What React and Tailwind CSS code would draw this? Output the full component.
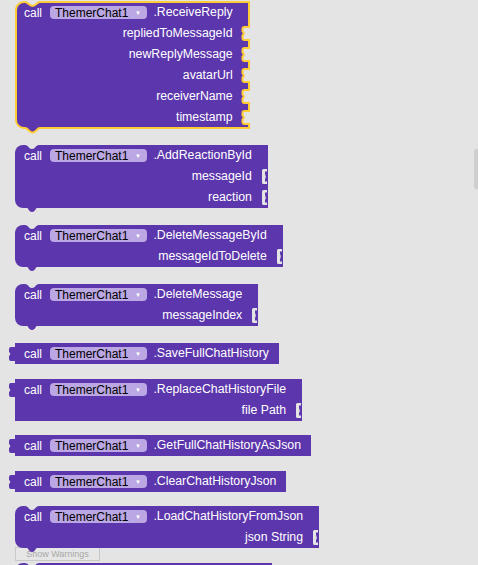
import React from "react";

const BG = "#e4e4e4";
const PURPLE = "#5c36ac";
const YELLOW = "#ffcc33";

function Pill() {
  return (
    <span className="flex items-center h-[13px] rounded-[4px] bg-[#bba7e4] pl-[5px] pr-[5px] text-black text-[12px]">
      <span>ThemerChat1</span>
      <span className="ml-[5px] w-[9px] text-center text-[6px] text-white leading-none">▼</span>
    </span>
  );
}

function Socket({ selected }) {
  if (selected) {
    return (
      <svg className="absolute right-[-1px] top-[3px]" width="10" height="15" viewBox="0 0 10 15">
        <path d="M10,1 H4.5 Q2.5,1 2.5,3 V5.5 Q5,7.5 2.5,9.5 V12 Q2.5,14 4.5,14 H10 Z" fill={BG} />
        <path d="M10,1 H4.5 Q2.5,1 2.5,3 V5.5 Q5,7.5 2.5,9.5 V12 Q2.5,14 4.5,14 H10" fill="none" stroke={YELLOW} strokeWidth="2" />
      </svg>
    );
  }
  return (
    <svg className="absolute right-0 top-[3px]" width="7" height="15" viewBox="0 0 7 15">
      <path d="M6,0 H2.5 Q1,0 1,1.5 V13.5 Q1,15 2.5,15 H6 V12.5 H4 V10 Q5.5,7.5 4,5 V2.5 H6 Z" fill={BG} />
    </svg>
  );
}

function TopNotch({ selected }) {
  if (selected) {
    return (
      <svg className="absolute top-[-1px] left-[9px]" width="15" height="7" viewBox="0 0 15 7">
        <path d="M0,0 H15 V1 C11.5,1 11.5,5 7.5,5 C3.5,5 3.5,1 0,1 Z" fill={BG} />
        <path d="M0,1 C3.5,1 3.5,5 7.5,5 C11.5,5 11.5,1 15,1" fill="none" stroke={YELLOW} strokeWidth="2" />
      </svg>
    );
  }
  return (
    <svg className="absolute top-0 left-[10px]" width="14" height="5" viewBox="0 0 14 5">
      <path d="M0,0 C3.5,0 3.5,4 7,4 C10.5,4 10.5,0 14,0 Z" fill={BG} />
    </svg>
  );
}

function BottomTab({ selected }) {
  if (selected) {
    return (
      <svg className="absolute top-full left-[9px] -mt-[2px]" width="15" height="9" viewBox="0 0 15 9">
        <path d="M0,0 H15 V2 C11.5,2 11.5,6.5 7.5,6.5 C3.5,6.5 3.5,2 0,2 Z" fill={PURPLE} />
        <path d="M0,2 C3.5,2 3.5,6.5 7.5,6.5 C11.5,6.5 11.5,2 15,2" fill="none" stroke={YELLOW} strokeWidth="2" />
      </svg>
    );
  }
  return (
    <svg className="absolute top-full left-[10px] -mt-[1px]" width="14" height="6" viewBox="0 0 14 6">
      <path d="M0,0 C3.5,0 3.5,5 7,5 C10.5,5 10.5,0 14,0 Z" fill={PURPLE} />
    </svg>
  );
}

function OutputTab() {
  return (
    <svg className="absolute right-full top-[4px] -mr-[1px]" width="8" height="14" viewBox="0 0 8 14">
      <path d="M8,0 H3 Q1,0 1,2 V5 Q3.5,7 1,9 V12 Q1,14 3,14 H8 Z" fill={PURPLE} />
    </svg>
  );
}

function Block({ method, params = [], output = false, selected = false, className = "" }) {
  const hasInputs = params.length > 0;
  const pr = hasInputs ? "pr-[16px]" : "pr-[10px]";
  const pl = selected ? "pl-[8px]" : "pl-[9px]";
  const shape = output ? "rounded-none" : "rounded-l-[8px]";
  const sel = selected ? "ml-[16px] outline-2 outline-solid outline-[#ffcc33] -outline-offset-1" : "ml-[15px]";
  return (
    <div className={`relative flex flex-col self-start bg-[#5c36ac] text-white text-[12.3px] ${shape} ${sel} ${className}`}>
      <div className={`flex items-center h-[21px] whitespace-nowrap ${pl} ${pr}`}>
        <span className="text-[12px]">call</span>
        <span className="ml-[8px]">
          <Pill />
        </span>
        <span className="ml-[6px]">{method}</span>
      </div>
      {params.map((p) => (
        <div key={p} className={`relative flex items-center justify-end h-[21px] whitespace-nowrap ${pr}`}>
          <span>{p}</span>
          <Socket selected={selected} />
        </div>
      ))}
      {!output && <TopNotch selected={selected} />}
      {!output && <BottomTab selected={selected} />}
      {output && <OutputTab />}
    </div>
  );
}

export default function App() {
  return (
    <div className="relative w-[478px] h-[565px] overflow-hidden bg-[#e4e4e4] font-['Liberation_Sans',Arial,sans-serif] text-[12px] leading-none">
      <div className="absolute left-[15px] top-[547px] w-[85px] h-[14px] border border-[#c8c8c8] bg-[#e6e6e6] flex items-center justify-center text-[9px] text-[#a8a8a8]">
        Show Warnings
      </div>
      <div className="absolute right-0 top-[149px] w-[4px] h-[40px] rounded-l-[2px] bg-[#cfcfcf]" />
      <div className="flex flex-col items-start">
        <Block
          selected
          className="mt-[2px]"
          method=".ReceiveReply"
          params={["repliedToMessageId", "newReplyMessage", "avatarUrl", "receiverName", "timestamp"]}
        />
        <Block className="mt-[17px]" method=".AddReactionById" params={["messageId", "reaction"]} />
        <Block className="mt-[17px]" method=".DeleteMessageById" params={["messageIdToDelete"]} />
        <Block className="mt-[17px]" method=".DeleteMessage" params={["messageIndex"]} />
        <Block className="mt-[17px]" output method=".SaveFullChatHistory" />
        <Block className="mt-[15px]" output method=".ReplaceChatHistoryFile" params={["file Path"]} />
        <Block className="mt-[14px]" output method=".GetFullChatHistoryAsJson" />
        <Block className="mt-[15px]" output method=".ClearChatHistoryJson" />
        <Block className="mt-[14px]" method=".LoadChatHistoryFromJson" params={["json String"]} />
        <div className="relative mt-[15px] ml-[15px] w-[257px] h-[21px] rounded-tl-[8px] bg-[#5c36ac]">
          <TopNotch />
        </div>
      </div>
    </div>
  );
}
